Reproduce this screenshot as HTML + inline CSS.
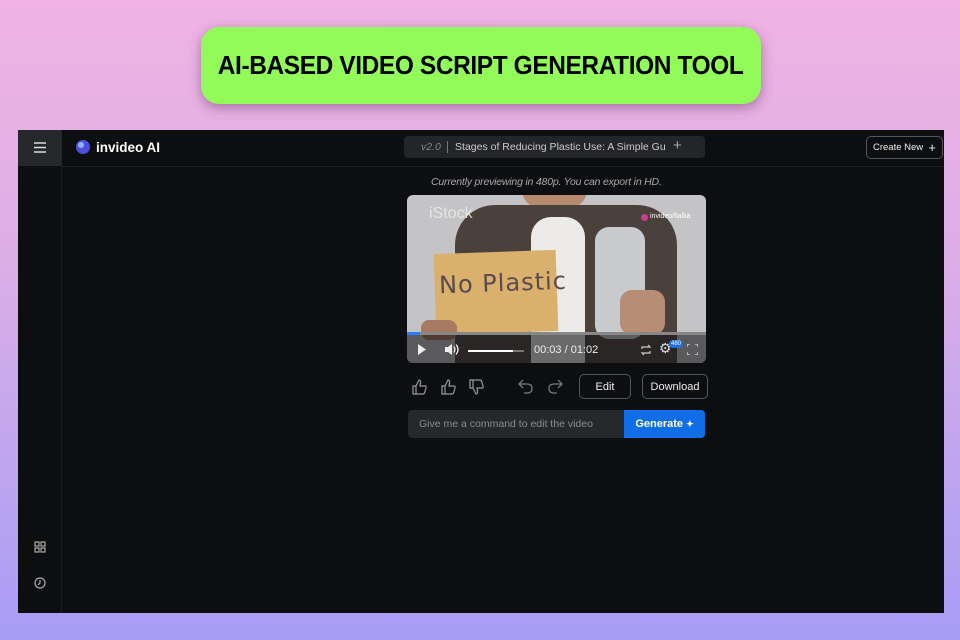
<!DOCTYPE html>
<html><head><meta charset="utf-8"><style>
*{margin:0;padding:0;box-sizing:border-box}
body{width:960px;height:640px;overflow:hidden;font-family:"Liberation Sans",sans-serif;background:linear-gradient(180deg,#f0b3e3 0%,#dcaee6 40%,#b8a3f0 80%,#a89cf6 100%);position:relative}
.pill{position:absolute;left:201px;top:27px;width:560px;height:77px;background:#92fb5a;border-radius:18px;box-shadow:0 4px 12px rgba(90,40,90,.45);display:flex;align-items:center;justify-content:center}
.pill span{font-weight:900;font-size:26px;letter-spacing:-.4px;color:#000;display:inline-block;transform:scaleX(.94);white-space:nowrap}
.app{position:absolute;left:18px;top:130px;width:926px;height:483px;background:#0d0e10}
.side{position:absolute;left:0;top:0;width:44px;height:483px;border-right:1px solid #1c1d20}
.ham{position:absolute;left:0;top:0;width:44px;height:36px;background:#27282b}
.hdr{position:absolute;left:44px;top:0;right:0;height:37px;border-bottom:1px solid #1e1f22}
.t{position:absolute;color:#e8e8ea;white-space:nowrap}
.btn{position:absolute;border:1px solid #55565a;border-radius:5px;color:#eee;font-size:11px;display:flex;align-items:center;justify-content:center}
.a{position:absolute}
</style></head><body>
<div class="pill"><span>AI-BASED VIDEO SCRIPT GENERATION TOOL</span></div>
<div class="app">
 <div class="side"></div>
 <div class="ham"><svg width="44" height="36"><g stroke="#ddd" stroke-width="1.5"><line x1="16" y1="13" x2="28" y2="13"/><line x1="16" y1="17.5" x2="28" y2="17.5"/><line x1="16" y1="22" x2="28" y2="22"/></g></svg></div>
 <div class="hdr"></div>
 <svg style="position:absolute;left:57px;top:9px" width="16" height="16"><circle cx="8" cy="8" r="7" fill="#4b4fe0"/><circle cx="6" cy="6" r="3" fill="#8fb4ff"/></svg>
 <div class="t" style="left:78px;top:10px;font-size:13.5px;font-weight:bold;color:#fff">invideo AI</div>
 <div style="position:absolute;left:386px;top:6px;width:301px;height:22px;background:#242528;border-radius:4px"></div>
 <div class="t" style="left:403px;top:11px;font-size:10.5px;color:#888;font-style:italic">v2.0</div>
 <div style="position:absolute;left:429px;top:11px;width:1px;height:12px;background:#777"></div>
 <div class="t" style="left:437px;top:11px;font-size:10.5px;color:#ccc">Stages of Reducing Plastic Use: A Simple Gu</div>
 <div class="t" style="left:655px;top:7px;font-size:15px;color:#aaa">+</div>
 <div class="btn" style="left:848px;top:6px;width:77px;height:23px;font-size:9.5px">Create New &nbsp;<span style="font-size:13px">+</span></div>
 <div class="t" style="left:413px;top:46px;font-size:10.5px;font-style:italic;color:#aaa;letter-spacing:-.2px">Currently previewing in 480p. You can export in HD.</div>
 <div style="position:absolute;left:389px;top:65px;width:299px;height:168px;border-radius:6px;overflow:hidden;background:#c4c4c6">
  <div class="a" style="left:115px;top:-5px;width:65px;height:18px;background:#b58a6e;border-radius:0 0 20px 20px"></div>
  <div class="a" style="left:48px;top:10px;width:222px;height:170px;background:#4a413c;border-radius:40px 40px 0 0"></div>
  <div class="a" style="left:124px;top:22px;width:54px;height:150px;background:#ecebea;border-radius:20px 20px 0 0"></div>
  <div class="a" style="left:28px;top:57px;width:122px;height:81px;background:#d9b06c;transform:rotate(-2deg)"></div>
  <div class="t" style="left:32px;top:74px;font-size:24px;color:#5a4a50;font-family:'DejaVu Sans';transform:rotate(-2deg);letter-spacing:1px">No Plastic</div>
  <div class="a" style="left:14px;top:125px;width:36px;height:20px;background:#a97a62;border-radius:8px"></div>
  <div class="a" style="left:188px;top:32px;width:50px;height:112px;background:#d6d9de;border-radius:14px;opacity:.9"></div>
  <div class="a" style="left:213px;top:95px;width:45px;height:45px;background:#b88d76;border-radius:12px"></div>
  <div class="t" style="left:22px;top:10px;font-size:16px;color:#eee;opacity:.8">iStock</div>
  <div class="a" style="left:234px;top:19px;width:7px;height:7px;border-radius:50%;background:#d03a8f"></div>
  <div class="t" style="left:243px;top:18px;font-size:7px;color:#fff">invideo/fialka</div>
  <div class="a" style="left:0;bottom:0;width:299px;height:30px;background:rgba(20,20,22,.6)"></div>
  <div class="a" style="left:0;top:137px;width:299px;height:3px;background:#888"></div>
  <div class="a" style="left:0;top:137px;width:13px;height:3px;background:#2a7dff"></div>
  <svg class="a" style="left:10px;top:149px" width="10" height="11"><path d="M1 0L9 5.5L1 11Z" fill="#eee"/></svg>
  <svg class="a" style="left:37px;top:148px" width="16" height="13"><path d="M1 4h3l4-3v11l-4-3H1z" fill="#eee"/><path d="M10 3.5q2 3 0 6M12 1.5q4 5 0 10" fill="none" stroke="#eee" stroke-width="1.3"/></svg>
  <div class="a" style="left:61px;top:155px;width:56px;height:2px;background:#777"></div>
  <div class="a" style="left:61px;top:155px;width:45px;height:2px;background:#fff"></div>
  <div class="t" style="left:127px;top:149px;font-size:11px;color:#eee">00:03 / 01:02</div>
  <svg class="a" style="left:233px;top:149px" width="12" height="12"><path d="M2 5V3h8l-2-2M10 7v2H2l2 2" fill="none" stroke="#ccc" stroke-width="1.2"/></svg>
  <div class="t" style="left:252px;top:145px;font-size:14px;color:#ddd">⚙</div>
  <div class="t" style="left:262px;top:145px;font-size:6px;color:#fff;background:#1f6fe5;border-radius:4px;padding:1px 2px">480</div>
  <svg class="a" style="left:280px;top:149px" width="11" height="11"><path d="M0 3V0h3M8 0h3v3M11 8v3H8M3 11H0V8" fill="none" stroke="#ddd" stroke-width="1.2"/></svg>
 </div>
 <svg class="a" style="left:393px;top:248px" width="80" height="18" fill="none" stroke="#999" stroke-width="1.2">
  <path d="M2 8h3v8H2zM5 8l3-6q2 0 1.5 3L9 8h5q1.5 0 1 2l-1.5 5q-.5 1-2 1H5" />
  <path d="M31 8h3v8h-3zM34 8l3-6q2 0 1.5 3L38 8h5q1.5 0 1 2l-1.5 5q-.5 1-2 1h-7.5"/>
  <path d="M59 2h3v8h-3zM62 10l3 6q2 0 1.5-3L66 10h5q1.5 0 1-2l-1.5-5q-.5-1-2-1h-7.5"/>
 </svg>
 <svg class="a" style="left:500px;top:248px" width="45" height="16" fill="none" stroke="#777" stroke-width="1.3">
  <path d="M5 2L1 6l4 4M1 6h8q5 0 5 4.5T9 15H6"/>
  <path d="M40 2l4 4-4 4M44 6h-8q-5 0-5 4.5t5 4.5h3"/>
 </svg>
 <div class="btn" style="left:561px;top:244px;width:52px;height:25px">Edit</div>
 <div class="btn" style="left:624px;top:244px;width:66px;height:25px">Download</div>
 <div style="position:absolute;left:390px;top:280px;width:297px;height:28px;background:#27282b;border-radius:4px;overflow:hidden">
  <div class="t" style="left:11px;top:8px;font-size:10.5px;color:#8a8b8e">Give me a command to edit the video</div>
  <div style="position:absolute;left:216px;top:0;width:81px;height:28px;background:#0f6ee6;color:#fff;font-size:11px;font-weight:bold;display:flex;align-items:center;justify-content:center">Generate&nbsp;<span style="font-size:9px">✦</span></div>
 </div>
 <svg style="position:absolute;left:16px;top:411px" width="12" height="12"><g fill="none" stroke="#aaa" stroke-width="1.2"><rect x="1" y="1" width="4" height="4"/><rect x="7" y="1" width="4" height="4"/><rect x="1" y="7" width="4" height="4"/><rect x="7" y="7" width="4" height="4"/></g></svg>
 <svg style="position:absolute;left:16px;top:447px" width="12" height="12"><circle cx="6" cy="6" r="5" fill="none" stroke="#aaa" stroke-width="1.2"/><path d="M6 3v3l-2 2" fill="none" stroke="#aaa" stroke-width="1.2"/></svg>
</div>
</body></html>
